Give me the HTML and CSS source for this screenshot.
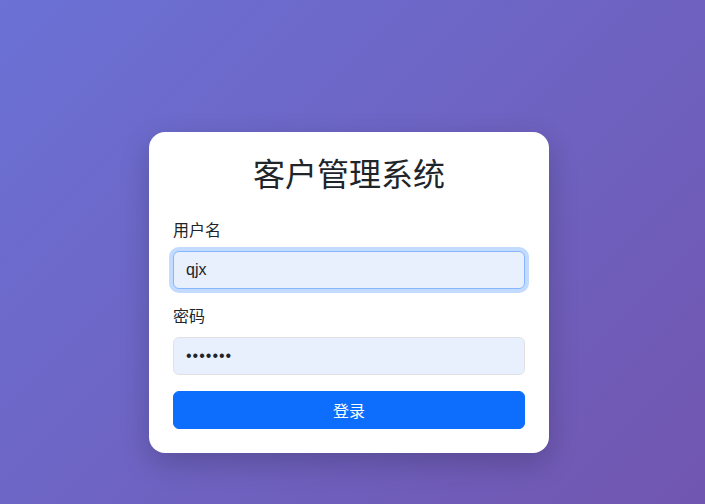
FILE: index.html
```html
<!doctype html>
<html>
<head>
    <meta charset="utf-8" />
    <title>客户管理系统</title>
    <link rel="stylesheet" href="styles.css">
</head>
<body>
<div class="login">
    <form class="login__card">
        <h2 class="login__title">客户管理系统</h2>
        <div class="field">
            <label class="field__label" for="username">用户名</label>
            <input class="field__input is-focus" id="username" type="text" value="qjx">
        </div>
        <div class="field">
            <label class="field__label" for="password">密码</label>
            <input class="field__input field__input--secret" id="password" type="password" value="1234567">
        </div>
        <button class="login__btn" type="button">登录</button>
    </form>
</div>
</body>
</html>
```

FILE: styles.css
```css
*{
    box-sizing: border-box;
}
body{
    margin: 0;
    font-family: "Liberation Sans", "Noto Sans CJK SC", sans-serif;
    color: #212529;
    background-image: linear-gradient(135deg, #6b71d5, #7156b0);
}
.login {
    min-height: 100vh;
    padding: 81px 7px 0 0;
    display: flex;
    justify-content: center;
    align-items: center;
}
.login__card {
    width: 400px;
    background-color: #fff;
    border-radius: 16px;
    padding: 24px;
    box-shadow: 0 10px 30px rgba(0, 0, 0, 0.2);
}
.login__title {
    margin: 0 0 24px;
    font-size: 32px;
    line-height: 39px;
    font-weight: 400;
    text-align: center;
}
.field {
    margin-bottom: 16px;
}
.field__label {
    display: block;
    margin-bottom: 8px;
    font-size: 16px;
    line-height: 24px;
}
.field__input {
    display: block;
    width: 100%;
    height: 38px;
    padding: 6px 12px;
    font-family: inherit;
    font-size: 16px;
    line-height: 24px;
    color: #212529;
    background-color: #e8f0fe;
    border: 1px solid #dee2e6;
    border-radius: 6px;
    outline: none;
}
.field__input--secret {
    letter-spacing: 1px;
}
.field__input.is-focus {
    border-color: #86b7fe;
    box-shadow: 0 0 0 4px rgba(13, 110, 253, 0.25);
}
.login__btn {
    display: block;
    width: 100%;
    height: 38px;
    font-family: inherit;
    font-size: 16px;
    color: #fff;
    background-color: #0d6efd;
    border: 1px solid #0d6efd;
    border-radius: 6px;
}
```
